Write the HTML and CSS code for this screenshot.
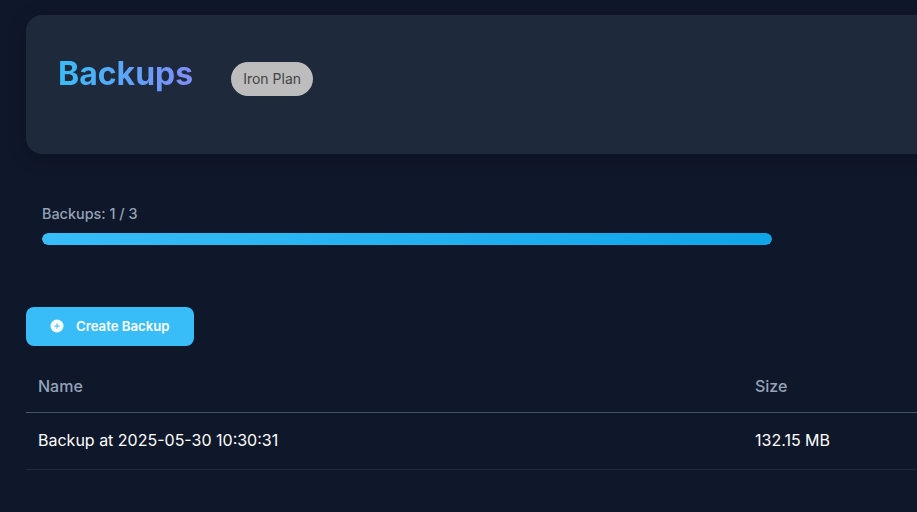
FILE: index.html
```html
<!DOCTYPE html>
<html lang="en">
<head>
    <meta charset="UTF-8">
    <meta name="viewport" content="width=device-width, initial-scale=1.0">
    <title>Backups</title>
    <link rel="stylesheet" href="styles.css">
</head>
<body>

    <main class="page">
        <header class="hero">
            <h1>Backups</h1>
            <span class="plan-badge">Iron Plan</span>
        </header>

        <section class="usage">
            <div class="usage-label">Backups: 1 / 3</div>
            <div class="usage-track">
                <div class="usage-fill"></div>
            </div>
        </section>

        <button class="create-btn">
            <svg class="create-icon" viewBox="0 0 14 14" width="14" height="14" aria-hidden="true">
                <circle cx="7" cy="7" r="6.5" fill="#fff"/>
                <path d="M7 4.2v5.6M4.2 7h5.6" stroke="#38bdf8" stroke-width="1" fill="none"/>
            </svg>
            Create Backup
        </button>

        <table class="backup-table">
            <thead>
                <tr>
                    <th class="col-name">Name</th>
                    <th>Size</th>
                </tr>
            </thead>
            <tbody>
                <tr>
                    <td>Backup at 2025-05-30 10:30:31</td>
                    <td>132.15 MB</td>
                </tr>
            </tbody>
        </table>
    </main>

</body>
</html>
```

FILE: styles.css
```css
html, body {
    height: 100%;
    overflow: hidden;
}
body {
    margin: 0;
    background-color: #0f172a;
    font-family: Inter, "Liberation Sans", sans-serif;
    color: #fff;
}
.page {
    width: 1100px;
    padding: 15px 0 0 26px;
}
.hero {
    display: flex;
    align-items: flex-start;
    height: 139px;
    box-sizing: border-box;
    padding: 39px 32px;
    background-color: #1e293b;
    border-radius: 16px;
    box-shadow: 0 4px 20px rgba(0, 0, 0, 0.2);
}
.hero h1 {
    margin: 0;
    font-size: 32px;
    line-height: 39px;
    font-weight: 700;
    background: linear-gradient(90deg, #38bdf8, #818cf8);
    -webkit-background-clip: text;
    background-clip: text;
    color: transparent;
}
.plan-badge {
    margin: 8px 0 0 38px;
    padding: 0 12px;
    height: 34px;
    line-height: 34px;
    font-size: 14px;
    color: #444;
    background-color: #bdbdbd;
    border-radius: 17px;
}
.usage {
    margin: 51px 0 0 16px;
    width: 730px;
}
.usage-label {
    font-size: 14.4px;
    line-height: 17px;
    font-weight: 500;
    color: #94a3b8;
    margin-bottom: 11px;
}
.usage-track {
    height: 12px;
    border-radius: 6px;
    background-color: #1e293b;
    overflow: hidden;
}
.usage-fill {
    height: 100%;
    border-radius: 6px;
    background: linear-gradient(90deg, #38bdf8, #0ea5e9);
}
.create-btn {
    display: flex;
    align-items: center;
    gap: 12px;
    margin-top: 62px;
    height: 39px;
    width: 168px;
    padding: 0 0 2px 24px;
    border: none;
    border-radius: 8px;
    background-color: #38bdf8;
    color: #fff;
    font-family: Inter, "Liberation Sans", sans-serif;
    font-size: 13.2px;
    font-weight: 600;
    cursor: pointer;
}
.create-icon {
    flex: none;
}
.backup-table {
    width: 100%;
    margin-top: 8px;
    border-collapse: collapse;
    font-size: 16px;
}
.backup-table th {
    height: 58px;
    box-sizing: border-box;
    padding: 6px 12px 0;
    text-align: left;
    font-weight: 500;
    color: #94a3b8;
    border-bottom: 1px solid #475569;
}
.backup-table .col-name {
    width: 717px;
}
.backup-table td {
    height: 57px;
    box-sizing: border-box;
    padding: 0 12px 2px;
    border-bottom: 1px solid #1e293b;
}
```
